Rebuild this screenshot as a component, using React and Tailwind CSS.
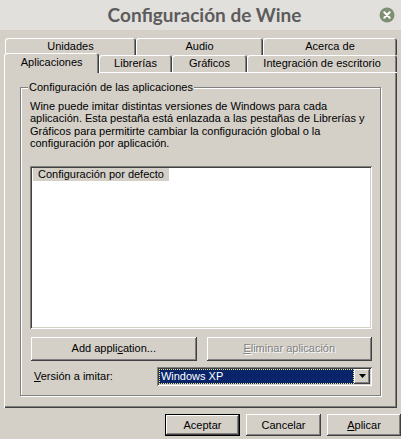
import React from "react";

const raised = "shadow-[inset_-1px_-1px_#404040,inset_1px_1px_#ffffff,inset_-2px_-2px_#808080]";
const tabCls = "flex items-center justify-center rounded-t-[3px] bg-[#d4d0c8] shadow-[inset_1px_1px_#ffffff,inset_-1px_0_#404040,inset_-2px_0_#808080]";

function Btn({ children, className = "", disabled = false }) {
  return (
    <div className={`flex items-center justify-center bg-[#d4d0c8] ${raised} ${disabled ? "text-[#808080] [text-shadow:1px_1px_#ffffff]" : ""} ${className}`}>
      {children}
    </div>
  );
}

export default function App() {
  return (
    <div className="w-[401px] h-[439px] overflow-hidden bg-[#d4d0c8] flex flex-col text-[11px] leading-[13px] text-black font-['Liberation_Sans',Arial,sans-serif]">
      {/* Title bar */}
      <div className="h-[30px] shrink-0 bg-[#e2e0dc] flex items-center">
        <div className="flex-1 pl-[14px]" />
        <div className="font-['Lato',sans-serif] font-bold text-[19px] text-[#5c5c5c] leading-[30px]">Configuración de Wine</div>
        <div className="flex-1 flex justify-end pr-[6px]">
          <svg width="16" height="16" viewBox="0 0 16 16">
            <circle cx="8" cy="8" r="7.5" fill="#7f8f71" />
            <path d="M5.3 5.3 L10.7 10.7 M10.7 5.3 L5.3 10.7" stroke="#ffffff" strokeWidth="2" strokeLinecap="round" />
          </svg>
        </div>
      </div>

      {/* Tabs */}
      <div className="px-[4px] pt-[8px] flex flex-col">
        <div className="flex h-[17px] ml-[1px]">
          <div className={`${tabCls} w-[132px]`}>Unidades</div>
          <div className={`${tabCls} w-[128px]`}>Audio</div>
          <div className={`${tabCls} w-[135px]`}>Acerca de</div>
        </div>
        <div className="flex h-[19px] -mt-[2px] items-end">
          <div className={`${tabCls} relative z-10 w-[96px] h-[20px] -mb-px pb-[2px]`}>Aplicaciones</div>
          <div className={`${tabCls} w-[73px] h-[17px]`}>Librerías</div>
          <div className={`${tabCls} w-[76px] h-[17px]`}>Gráficos</div>
          <div className={`${tabCls} w-[151px] h-[17px]`}>Integración de escritorio</div>
        </div>

        {/* Panel */}
        <div className="h-[336px] px-[16px] pt-[15px] pb-[12px] shadow-[inset_1px_1px_#ffffff,inset_-1px_-1px_#404040,inset_-2px_-2px_#808080]">
          <div className="h-[309px] flex flex-col border border-[#808080] shadow-[inset_1px_1px_#ffffff,1px_1px_#ffffff] pl-[9px] pr-[8px]">
            <div className="-mt-[7px] -ml-[2px] self-start px-[1px] bg-[#d4d0c8] h-[13px]">Configuración de las aplicaciones</div>
            <p className="mt-[6px] leading-[12.4px]">
              Wine puede imitar distintas versiones de Windows para cada aplicación. Esta pestaña está enlazada a las pestañas de Librerías y Gráficos para permitirte cambiar la configuración global o la configuración por aplicación.
            </p>
            <div className="mt-[16px] h-[163px] bg-white shadow-[inset_1px_1px_#808080,inset_-1px_-1px_#ffffff,inset_2px_2px_#404040,inset_-2px_-2px_#d4d0c8] pt-[2px] pl-[3px]">
              <span className="inline-block bg-[#d4d0c8] px-[5px] leading-[13px]">Configuración por defecto</span>
            </div>
            <div className="mt-[8px] h-[24px] flex gap-[10px]">
              <Btn className="w-[167px] ml-px">Add appli<span className="underline">c</span>ation...</Btn>
              <Btn className="w-[167px]" disabled><span className="underline">E</span>liminar aplicación</Btn>
            </div>
            <div className="mt-[6px] h-[19px] flex items-center">
              <div className="w-[128px] pl-[4px]"><span className="underline">V</span>ersión a imitar:</div>
              <div className="w-[217px] h-[19px] flex bg-white p-[2px] shadow-[inset_1px_1px_#808080,inset_-1px_-1px_#ffffff,inset_2px_2px_#404040,inset_-2px_-2px_#d4d0c8]">
                <div className="flex-1 bg-[#0a246a] text-white border border-dotted border-[#f0e68c] flex items-center pl-[1px] leading-[13px]">Windows XP</div>
                <div className={`w-[16px] flex items-center justify-center bg-[#d4d0c8] ${raised}`}>
                  <svg width="7" height="4" viewBox="0 0 7 4"><path d="M0 0 H7 L3.5 4 Z" fill="#000000" /></svg>
                </div>
              </div>
            </div>
          </div>
        </div>
      </div>

      {/* Bottom buttons */}
      <div className="flex justify-end gap-[6px] pt-[6px]">
        <Btn className="w-[75px] h-[22px] border border-black">Aceptar</Btn>
        <Btn className="w-[75px] h-[22px]">Cancelar</Btn>
        <Btn className="w-[74px] h-[22px]"><span className="underline">A</span>plicar</Btn>
      </div>
    </div>
  );
}
